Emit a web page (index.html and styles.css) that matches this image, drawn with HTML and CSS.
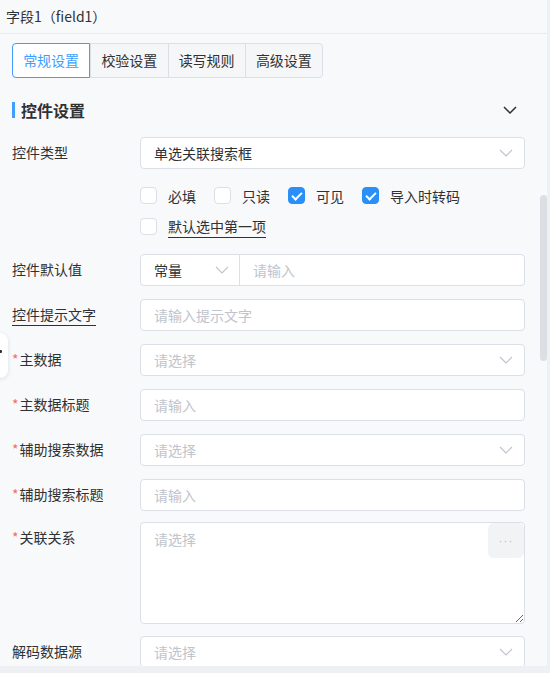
FILE: index.html
```html
<!DOCTYPE html>
<html lang="zh-CN">
<head>
    <meta charset="UTF-8">
    <meta name="viewport" content="width=device-width, initial-scale=1.0">
    <title>字段设置</title>
    <link rel="stylesheet" href="styles.css">
</head>
<body>
    <div class="panel">
        <div class="panel-header">字段1（field1）</div>

        <div class="tabs">
            <div class="tab active">常规设置</div>
            <div class="tab">校验设置</div>
            <div class="tab">读写规则</div>
            <div class="tab">高级设置</div>
        </div>

        <div class="section-head">
            <span class="section-title">控件设置</span>
            <svg class="section-toggle" width="14" height="8" viewBox="0 0 14 8"><polyline points="1,1 7,7 13,1" fill="none" stroke="#303133" stroke-width="1.5"/></svg>
        </div>

        <div class="form">
            <div class="form-item">
                <label class="form-label">控件类型</label>
                <div class="select">
                    <span class="select-value">单选关联搜索框</span>
                    <svg class="arrow" width="14" height="8" viewBox="0 0 14 8"><polyline points="1,1 7,7 13,1" fill="none" stroke="#c0c4cc" stroke-width="1.2"/></svg>
                </div>
            </div>

            <div class="form-item check-item">
                <span class="form-label"></span>
                <div class="check-group">
                    <div class="check-line">
                        <label class="checkbox"><span class="box"></span>必填</label>
                        <label class="checkbox"><span class="box"></span>只读</label>
                        <label class="checkbox"><span class="box checked"></span>可见</label>
                        <label class="checkbox"><span class="box checked"></span>导入时转码</label>
                    </div>
                    <div class="check-line">
                        <label class="checkbox"><span class="box"></span><span class="tip">默认选中第一项</span></label>
                    </div>
                </div>
            </div>

            <div class="form-item">
                <label class="form-label">控件默认值</label>
                <div class="combo">
                    <div class="combo-type">
                        <span class="select-value">常量</span>
                        <svg class="arrow" width="14" height="8" viewBox="0 0 14 8"><polyline points="1,1 7,7 13,1" fill="none" stroke="#c0c4cc" stroke-width="1.2"/></svg>
                    </div>
                    <input class="combo-input" type="text" placeholder="请输入">
                </div>
            </div>

            <div class="form-item">
                <label class="form-label"><span class="tip">控件提示文字</span></label>
                <input class="input" type="text" placeholder="请输入提示文字">
            </div>

            <div class="form-item">
                <label class="form-label required">主数据</label>
                <div class="select">
                    <span class="placeholder">请选择</span>
                    <svg class="arrow" width="14" height="8" viewBox="0 0 14 8"><polyline points="1,1 7,7 13,1" fill="none" stroke="#c0c4cc" stroke-width="1.2"/></svg>
                </div>
            </div>

            <div class="form-item">
                <label class="form-label required">主数据标题</label>
                <input class="input" type="text" placeholder="请输入">
            </div>

            <div class="form-item">
                <label class="form-label required">辅助搜索数据</label>
                <div class="select">
                    <span class="placeholder">请选择</span>
                    <svg class="arrow" width="14" height="8" viewBox="0 0 14 8"><polyline points="1,1 7,7 13,1" fill="none" stroke="#c0c4cc" stroke-width="1.2"/></svg>
                </div>
            </div>

            <div class="form-item">
                <label class="form-label required">辅助搜索标题</label>
                <input class="input" type="text" placeholder="请输入">
            </div>

            <div class="form-item area-item">
                <label class="form-label required">关联关系</label>
                <div class="textarea-wrap">
                    <textarea class="textarea" placeholder="请选择"></textarea>
                    <button class="more-btn">···</button>
                </div>
            </div>

            <div class="form-item">
                <label class="form-label">解码数据源</label>
                <div class="select">
                    <span class="placeholder">请选择</span>
                    <svg class="arrow" width="14" height="8" viewBox="0 0 14 8"><polyline points="1,1 7,7 13,1" fill="none" stroke="#c0c4cc" stroke-width="1.2"/></svg>
                </div>
            </div>
        </div>

        <!-- collapse handle on the left edge -->
        <div class="side-handle"><span class="handle-dot"></span></div>
        <div class="scroll-thumb"></div>
    </div>
</body>
</html>
```

FILE: styles.css
```css
* {
    box-sizing: border-box;
}
body {
    margin: 0;
    background: #eef0f3;
    font-family: "Noto Sans CJK SC", "Noto Sans", sans-serif;
    font-size: 14px;
    color: #303133;
}
.panel {
    position: relative;
    width: 547px;
    height: 666px;
    overflow: hidden;
    background: #f8f9fb;
}
.panel-header {
    height: 34px;
    line-height: 33px;
    padding-left: 6px;
    border-bottom: 1px solid #e9ebee;
    color: #303133;
}
.tabs {
    display: flex;
    width: 311px;
    height: 35px;
    margin: 9px 0 0 12px;
    border: 1px solid #dcdfe6;
    border-radius: 4px;
    background: #f5f6f8;
}
.tab {
    flex: 1;
    line-height: 33px;
    text-align: center;
    border-left: 1px solid #dcdfe6;
    color: #303133;
}
.tab:first-child {
    border-left: none;
}
.tab.active {
    margin: -1px 0 -1px -1px;
    line-height: 33px;
    background: #fff;
    border: 1px solid #409eff;
    border-radius: 4px 0 0 4px;
    color: #409eff;
}
.section-head {
    display: flex;
    justify-content: space-between;
    align-items: center;
    height: 34px;
    margin: 15px 0 10px 12px;
    padding-right: 30px;
}
.section-title {
    padding-left: 6px;
    border-left: 3px solid #409eff;
    line-height: 16px;
    font-size: 16px;
    font-weight: bold;
}
.form {
    padding-left: 12px;
}
.form-item {
    display: grid;
    grid-template-columns: 128px 385px;
    margin-bottom: 13px;
}
.form-label {
    line-height: 30px;
}
.required::before {
    content: "*";
    color: #f56c6c;
    margin-right: 1px;
}
.tip {
    border-bottom: 1px solid #303133;
    padding-bottom: 1px;
}
.select, .input, .combo {
    height: 32px;
    background: #fff;
    border: 1px solid #dcdfe6;
    border-radius: 4px;
}
.select {
    display: flex;
    justify-content: space-between;
    align-items: center;
    padding: 0 11px 0 13px;
}
.arrow {
    flex-shrink: 0;
}
.placeholder, .input::placeholder, .combo-input::placeholder, .textarea::placeholder {
    color: #c0c4cc;
}
.input, .combo-input, .textarea {
    font-family: inherit;
    font-size: 14px;
    color: #303133;
    outline: none;
}
.input {
    padding: 0 13px;
}
.check-item {
    margin-top: -2px;
    margin-bottom: 12px;
}
.check-line {
    display: flex;
    align-items: center;
    height: 31px;
}
.checkbox {
    display: flex;
    align-items: center;
    margin-right: 18px;
}
.box {
    width: 17px;
    height: 17px;
    margin-right: 11px;
    background: #fff;
    border: 1px solid #dcdfe6;
    border-radius: 4px;
    position: relative;
}
.box.checked {
    background: #2a8ff7;
    border-color: #2a8ff7;
}
.box.checked::after {
    content: "";
    position: absolute;
    left: 5px;
    top: 2px;
    width: 4px;
    height: 8px;
    border: solid #fff;
    border-width: 0 2px 2px 0;
    transform: rotate(45deg);
}
.combo {
    display: flex;
}
.combo-type {
    display: flex;
    justify-content: space-between;
    align-items: center;
    width: 99px;
    padding: 0 10px 0 13px;
    border-right: 1px solid #dcdfe6;
}
.combo-input {
    flex: 1;
    min-width: 0;
    border: none;
    background: transparent;
    padding: 0 13px;
}
.area-item {
    margin-top: -2px;
    margin-bottom: 12px;
}
.textarea-wrap {
    position: relative;
}
.textarea {
    display: block;
    width: 385px;
    height: 102px;
    padding: 5px 13px;
    border: 1px solid #dcdfe6;
    border-radius: 4px;
    background: #fff;
    resize: vertical;
    line-height: 22px;
}
.more-btn {
    position: absolute;
    top: 1px;
    right: 1px;
    width: 36px;
    height: 35px;
    border: none;
    border-radius: 6px;
    background: #f2f3f5;
    color: #c0c4cc;
    font-size: 12px;
    letter-spacing: 1px;
}
.side-handle {
    position: absolute;
    left: -8px;
    top: 333px;
    width: 16px;
    height: 45px;
    background: #fff;
    border-radius: 8px;
    box-shadow: 0 1px 4px rgba(0, 0, 0, 0.12);
}
.handle-dot {
    position: absolute;
    left: 7px;
    top: 17px;
    width: 3px;
    height: 3px;
    background: #303133;
    border-radius: 1px;
}
.scroll-thumb {
    position: absolute;
    left: 540px;
    top: 195px;
    width: 7px;
    height: 166px;
    background: #dcdee3;
    border-radius: 4px;
}
```
